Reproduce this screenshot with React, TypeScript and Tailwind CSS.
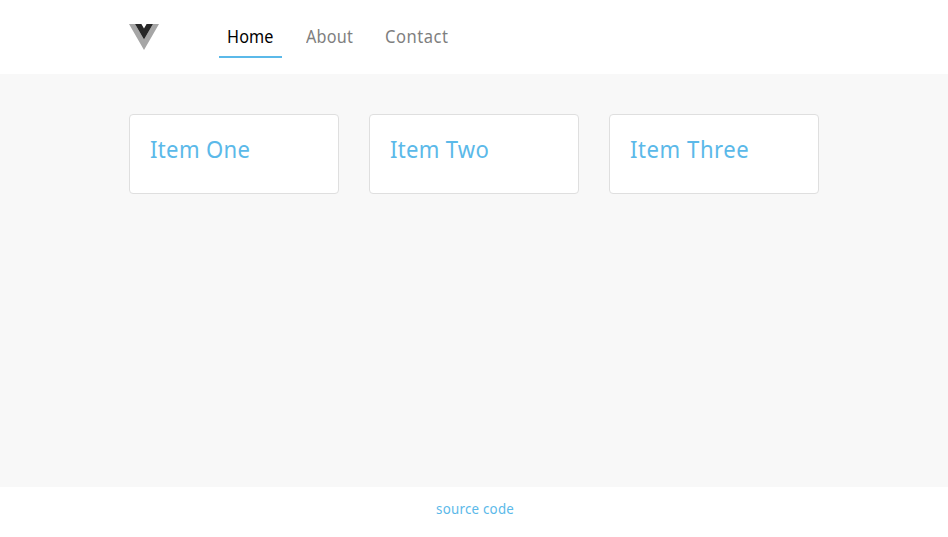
const items = [
  { label: "Item One", tracking: "tracking-[0.35px]" },
  { label: "Item Two", tracking: "tracking-[0.3px]" },
  { label: "Item Three", tracking: "tracking-[0.6px]" },
];

const links = [
  { label: "Home", box: "w-[63px]", text: "scale-x-[0.9] tracking-[0.15px]", active: true },
  { label: "About", box: "w-[63px]", text: "scale-x-[0.9] tracking-[0.25px]", active: false },
  { label: "Contact", box: "w-[79px]", text: "scale-x-[0.92] tracking-[0.55px]", active: false },
];

function Logo() {
  return (
    <svg width="30" height="26" viewBox="0 0 30 26" className="block">
      <path d="M0 0h6l9 15.6L24 0h6L15 26z" fill="#a6a6a6" />
      <path d="M6 0h6.4L15 4.5 17.6 0H24l-9 15.6z" fill="#282828" />
    </svg>
  );
}

export default function App() {
  return (
    <div className="flex h-[537px] flex-col bg-white font-['Noto_Sans',sans-serif]">
      <header className="h-[74px]">
        <div className="mx-auto flex w-[690px] items-start">
          <div className="pt-6">
            <Logo />
          </div>
          <nav className="ml-[60px] flex gap-4 pt-4">
            {links.map((l) => (
              <a
                key={l.label}
                className={`h-[42px] whitespace-nowrap border-b-2 px-2 pt-px text-lg leading-[38px] ${l.box} ${
                  l.active ? "border-[#5bb9e9] text-black" : "border-transparent text-[#7f7f7f]"
                }`}
              >
                <span className={`inline-block origin-left ${l.text}`}>{l.label}</span>
              </a>
            ))}
          </nav>
        </div>
      </header>
      <main className="flex-1 bg-[#f8f8f8] pt-10">
        <div className="mx-auto grid w-[690px] grid-cols-3 gap-[30px]">
          {items.map((i) => (
            <div
              key={i.label}
              className="h-20 whitespace-nowrap rounded border border-[#dfdfdf] bg-white p-5 text-2xl leading-7 text-[#5bb9e9]"
            >
              <span className={`inline-block origin-left scale-x-[0.92] ${i.tracking}`}>{i.label}</span>
            </div>
          ))}
        </div>
      </main>
      <footer className="flex h-[50px] justify-center pl-[3px] pt-3 text-sm text-[#5bb9e9]">
        <span className="block scale-x-[0.95] tracking-[0.26px]">source code</span>
      </footer>
    </div>
  );
}
